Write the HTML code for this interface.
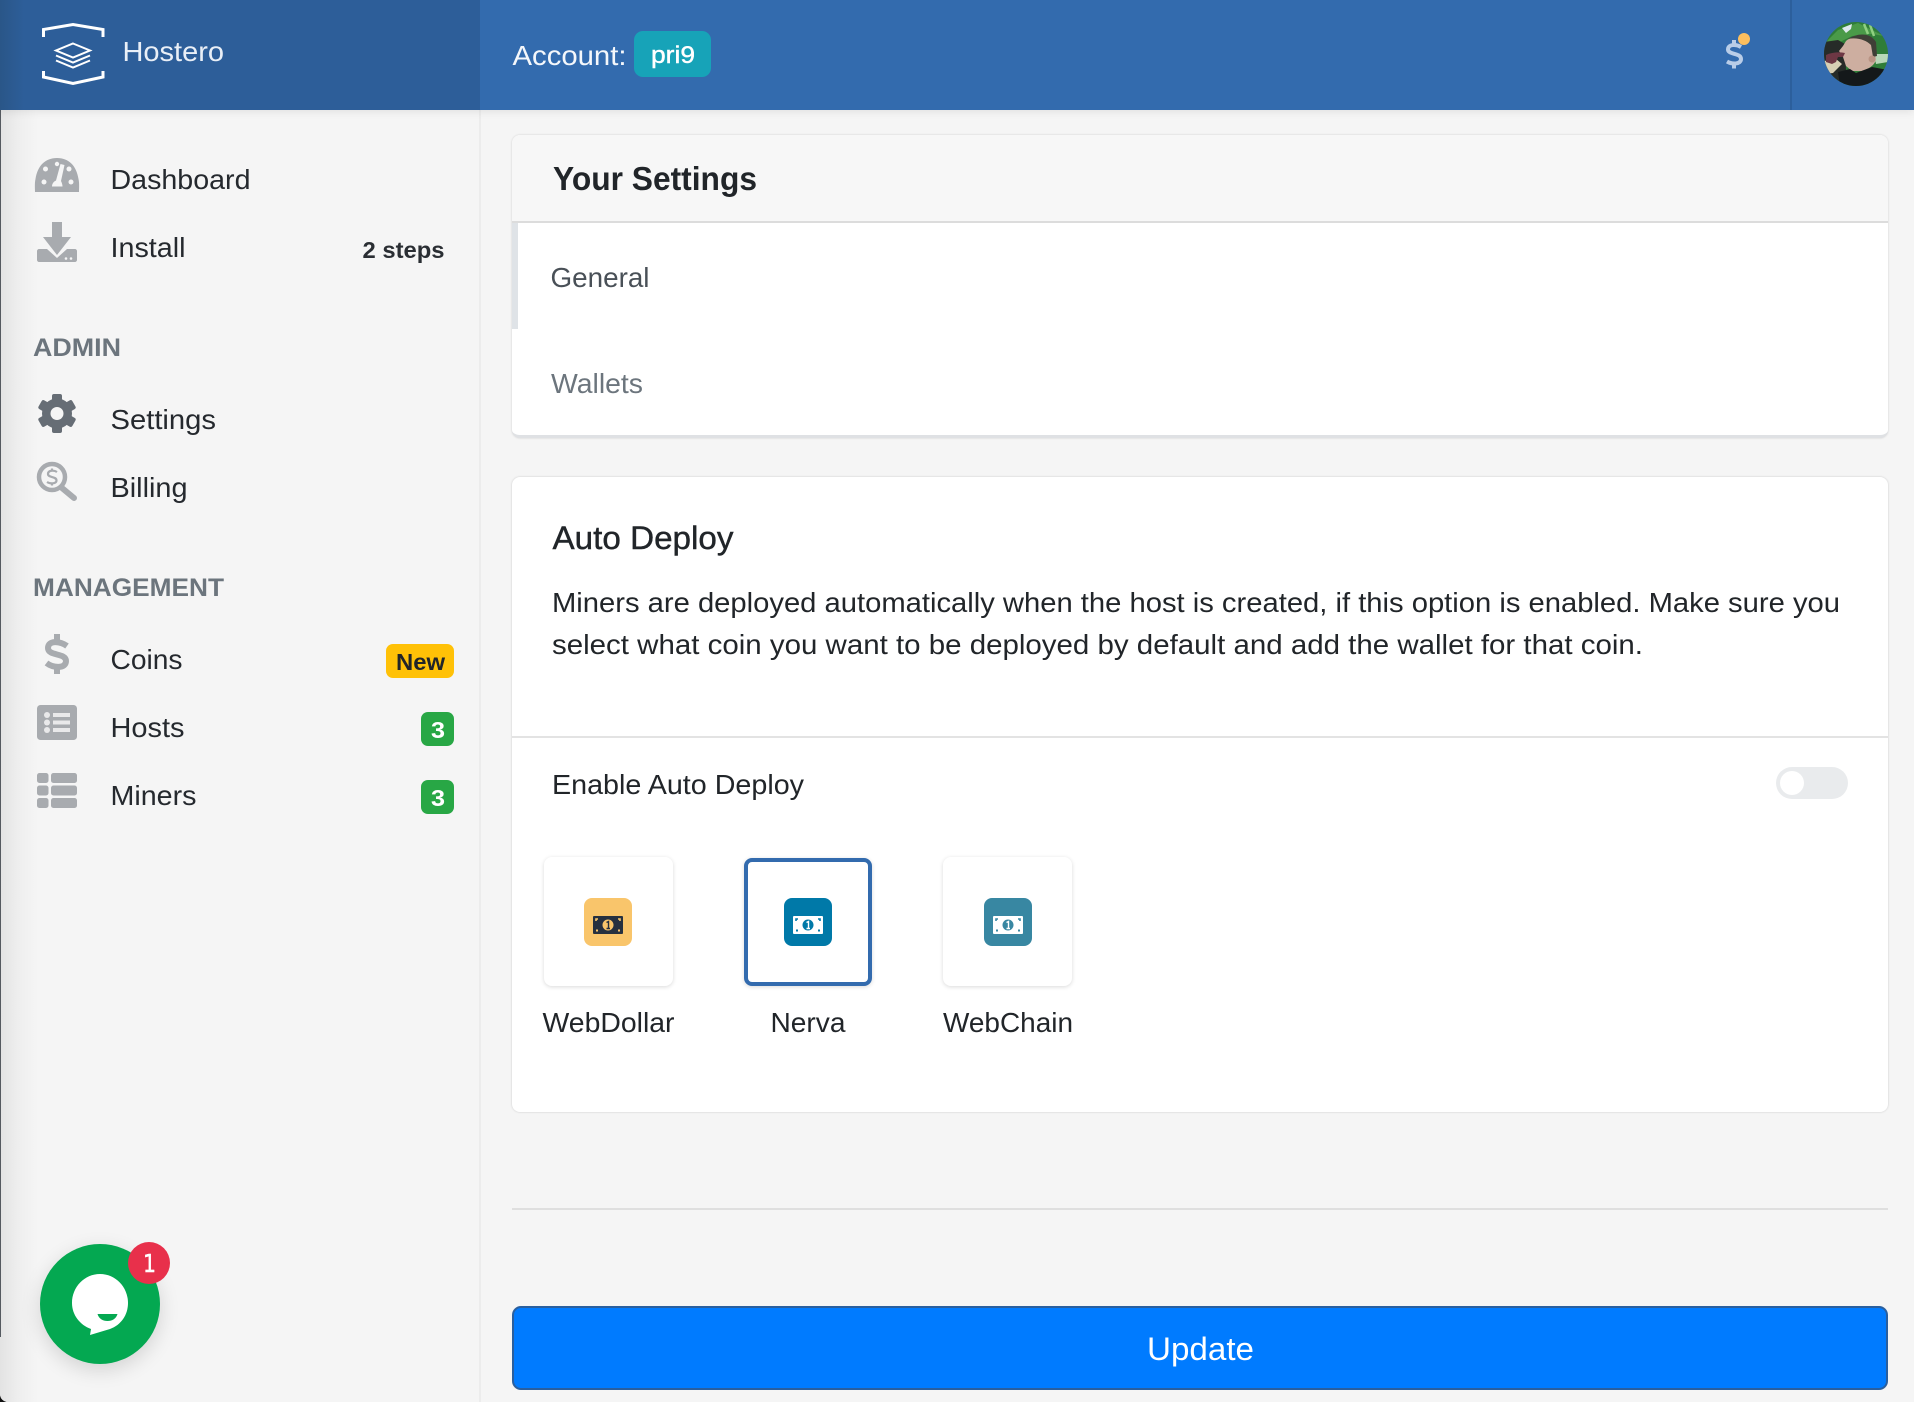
<!DOCTYPE html>
<html lang="en">
<head>
<meta charset="utf-8">
<title>Hostero - Settings</title>
<style>
html,body{margin:0;padding:0;width:1914px;height:1402px;overflow:hidden;background:#111;}
#page{position:absolute;left:0;top:0;width:1914px;height:1402px;background:#f5f5f5;border-bottom-left-radius:8px;overflow:hidden;}
.b{position:absolute;box-sizing:border-box;}
svg{position:absolute;left:0;top:0;}
text{font-family:"Liberation Sans",Arial,sans-serif;}
</style>
</head>
<body>
<div id="page">
  <!-- sidebar -->
  <div class="b" style="left:0;top:110px;width:481px;height:1292px;background:linear-gradient(90deg,#e3e3e3 0,#eee 18px,#f5f5f5 38px);border-right:2px solid #ececec;"></div>
  <div class="b" style="left:0;top:0;width:1px;height:1337px;background:#555a60;"></div>
  <!-- header -->
  <div class="b" style="left:0;top:0;width:1914px;height:110px;background:#336bae;box-shadow:0 2px 8px rgba(0,0,0,.08);"></div>
  <div class="b" style="left:0;top:0;width:480px;height:110px;background:linear-gradient(90deg,#2a5688 0,#2d5e99 24px);"></div>
  <div class="b" style="left:1790px;top:0;width:2px;height:110px;background:#2c5f9c;"></div>
  <div class="b" style="left:634px;top:31px;width:77px;height:46px;background:#17a3b8;border-radius:9px;"></div>

  <!-- card 1 -->
  <div class="b" style="left:512px;top:135px;width:1376px;height:303px;background:#fff;border-radius:8px;border-bottom:3px solid #dfe1e4;box-shadow:0 0 2px rgba(0,0,0,.16);overflow:hidden;">
    <div class="b" style="left:0;top:0;width:100%;height:88px;background:#f7f7f7;border-bottom:2px solid #dcdcdc;"></div>
    <div class="b" style="left:0;top:88px;width:6px;height:106px;background:#dfe3e7;"></div>
  </div>
  <!-- card 2 -->
  <div class="b" style="left:512px;top:477px;width:1376px;height:635px;background:#fff;border-radius:8px;box-shadow:0 0 2px rgba(0,0,0,.18);">
    <div class="b" style="left:0;top:259px;width:100%;height:2px;background:#e3e3e3;"></div>
    <div class="b" style="left:1264px;top:290px;width:72px;height:32px;background:#e9ebed;border-radius:16px;"></div>
    <div class="b" style="left:1268px;top:294px;width:24px;height:24px;background:#fff;border-radius:50%;"></div>
    <div class="b" style="left:32px;top:380px;width:129px;height:129px;background:#fff;border-radius:8px;box-shadow:0 1px 4px rgba(0,0,0,.15);"></div>
    <div class="b" style="left:232px;top:381px;width:128px;height:128px;background:#fff;border-radius:8px;border:4px solid #336bae;box-shadow:0 1px 4px rgba(0,0,0,.15);"></div>
    <div class="b" style="left:431px;top:380px;width:129px;height:129px;background:#fff;border-radius:8px;box-shadow:0 1px 4px rgba(0,0,0,.15);"></div>
    <div class="b" style="left:72px;top:421px;width:48px;height:48px;background:#f9c56b;border-radius:8px;"></div>
    <div class="b" style="left:272px;top:421px;width:48px;height:48px;background:#0079a8;border-radius:8px;"></div>
    <div class="b" style="left:472px;top:421px;width:48px;height:48px;background:#3887a2;border-radius:8px;"></div>
  </div>
  <!-- hr + button -->
  <div class="b" style="left:512px;top:1208px;width:1376px;height:2px;background:#dfdfdf;"></div>
  <div class="b" style="left:512px;top:1306px;width:1376px;height:84px;background:#007bff;border:2px solid #2a5f9e;border-radius:9px;"></div>
  <!-- sidebar badges -->
  <div class="b" style="left:386px;top:644px;width:68px;height:34px;background:#ffc107;border-radius:7px;"></div>
  <div class="b" style="left:421px;top:712px;width:33px;height:34px;background:#28a745;border-radius:7px;"></div>
  <div class="b" style="left:421px;top:780px;width:33px;height:34px;background:#28a745;border-radius:7px;"></div>
  <!-- chat -->
  <div class="b" style="left:40px;top:1244px;width:120px;height:120px;background:#04a851;border-radius:50%;box-shadow:0 6px 20px rgba(0,0,0,.14);"></div>
  <div class="b" style="left:128px;top:1242px;width:42px;height:42px;background:#e8304b;border-radius:50%;"></div>

  <svg width="1914" height="1402" viewBox="0 0 1914 1402" xmlns="http://www.w3.org/2000/svg">
    <defs>
      <clipPath id="av"><circle cx="1856" cy="54" r="32"/></clipPath>
    </defs>
    <!-- logo -->
    <g fill="none" stroke="#fff" stroke-width="3">
      <path d="M43.500 37V29.500L73 24.500L103 29.500V37"/>
      <path d="M43.500 71V77L73 83.500L103 77V71"/>
      <path d="M73 43.500L90 50.500L73 57.500L56 50.500Z" stroke-width="2"/>
      <path d="M56 55.500L73 62.500L90 55.500" stroke-width="2"/>
      <path d="M56 60.500L73 67.500L90 60.500" stroke-width="2"/>
    </g>
    <text x="122.500" y="61" font-size="28" fill="#e9eff7" textLength="101.500" lengthAdjust="spacingAndGlyphs">Hostero</text>
    <text x="512.500" y="65" font-size="28" fill="#f4f7fb" textLength="114" lengthAdjust="spacingAndGlyphs">Account:</text>
    <text x="651" y="63" font-size="24" fill="#fff" stroke="#fff" stroke-width=".4" textLength="44" lengthAdjust="spacingAndGlyphs">pri9</text>

    <!-- header dollar -->
    <g fill="none" stroke="#b9cde8" stroke-width="4">
      <path d="M1741 47C1736 44 1728 44 1728 49.500C1728 55 1741 52.500 1741 59C1741 64.500 1732 64.500 1727 61.500"/>
      <path d="M1734 40V45M1734 63V68.500"/>
    </g>
    <circle cx="1744" cy="39" r="6" fill="#fcbf5f"/>

    <!-- avatar -->
    <g clip-path="url(#av)">
      <rect x="1824" y="22" width="64" height="64" fill="#2f7d38"/>
      <path d="M1824 44L1838 30L1858 23L1884 36L1872 34L1852 36L1840 42Z" fill="#4a9a48"/>
      <path d="M1842 28L1852 24L1851 29L1846 33Z" fill="#dfe9ee"/>
      <path d="M1864 24L1868 34M1870 25L1874 36" stroke="#8fcf80" stroke-width="2.500" fill="none"/>
      <path d="M1824 42L1838 40L1845 44L1846 70L1838 86H1824Z" fill="#262b28"/>
      <path d="M1824 61L1836 59L1842 64L1833 73L1824 74Z" fill="#d7cfb4"/>
      <path d="M1874 54H1888V62L1876 64Z" fill="#b8d8b8"/>
      <path d="M1846 41C1853 35 1867 34 1874 42L1876 60C1874 66 1868 69 1862 71L1852 71L1846 66L1843 57L1839 51L1843 46Z" fill="#cdaea0"/>
      <path d="M1848 39C1857 33 1870 32 1876 42L1877 56L1873 57L1871 45C1866 40 1857 37 1848 39Z" fill="#3f3f36"/>
      <circle cx="1872" cy="59" r="3.500" fill="#b99484"/>
      <path d="M1826 55C1832 52 1840 52 1845 53L1843 57L1838 57L1836 62L1832 64L1826 62Z" fill="#6d3744"/>
      <path d="M1838 72L1850 69L1856 73L1872 67L1888 70V86H1840Z" fill="#14181a"/>
    </g>

    <!-- sidebar icons -->
    <g fill="#a8abaf">
      <!-- dashboard -->
      <path d="M35 192C35 189 34.500 183 35.500 179C37.500 166 45 158 57 158C69 158 76.500 166 78.500 179C79.500 183 79 189 79 192Z"/>
      <g fill="#f5f5f5">
        <circle cx="44" cy="182" r="2.500"/><circle cx="45.500" cy="169" r="2.500"/><circle cx="57" cy="164" r="2.200"/><circle cx="69" cy="169" r="2.500"/><circle cx="71" cy="182" r="2.500"/>
        <path d="M60.500 164L64.500 165L61 181C62 183 62.500 185 62.500 186.500H52C52 184 53.500 181.500 56 180.500Z"/>
      </g>
      <!-- install -->
      <path d="M52 222H62V237H71L57 255L43 237H52Z"/>
      <path d="M37 251C37 250 38 249 39 249H47L57 258L67 249H75C76 249 77 250 77 251V260C77 261 76 262 75 262H39C38 262 37 261 37 260Z"/>
    </g>
    <circle cx="66" cy="258.500" r="1.300" fill="#f5f5f5"/><circle cx="71" cy="258.500" r="1.300" fill="#f5f5f5"/>
    <!-- billing -->
    <circle cx="52" cy="477" r="13" fill="none" stroke="#a8abaf" stroke-width="4.500"/>
    <path d="M62 488L74 498" stroke="#a8abaf" stroke-width="6" stroke-linecap="round" fill="none"/>
    <g fill="none" stroke="#a8abaf" stroke-width="2.200" transform="translate(0,-1)">
      <path d="M57 473C54 471 48 471 48 475C48 479 56.500 477 56.500 481.500C56.500 485 50 485 47 483"/>
      <path d="M52 469.500V472M52 484V486.500"/>
    </g>
    <!-- settings gear -->
    <g fill="#666d75">
      <rect x="52" y="394" width="10" height="39" rx="2"/>
      <rect x="52" y="394" width="10" height="39" rx="2" transform="rotate(60 57 413.500)"/>
      <rect x="52" y="394" width="10" height="39" rx="2" transform="rotate(120 57 413.500)"/>
      <circle cx="57" cy="413.500" r="15"/>
    </g>
    <circle cx="57" cy="413.500" r="6.500" fill="#f5f5f5"/>
    <!-- coins -->
    <g fill="none" stroke="#a8abaf" stroke-width="6" transform="translate(0,18)">
      <path d="M67 628C60 623 48 622 48 630C48 638.500 66 634.500 66 643C66 651 53 650 46.500 645"/>
      <path d="M57 616V624M57 648V656"/>
    </g>
    <!-- hosts -->
    <rect x="37" y="705" width="40" height="35" rx="3.500" fill="#a8abaf"/>
    <g fill="#e9e9ea">
      <circle cx="47" cy="715" r="3"/><circle cx="47" cy="722.500" r="3"/><circle cx="47" cy="730" r="3"/>
      <rect x="53" y="713" width="17" height="4"/><rect x="53" y="720.500" width="17" height="4"/><rect x="53" y="728" width="17" height="4"/>
    </g>
    <!-- miners -->
    <g fill="#a8abaf">
      <rect x="37" y="773" width="11.500" height="10" rx="2.500"/><rect x="51" y="773" width="26" height="10" rx="2.500"/>
      <rect x="37" y="785.500" width="11.500" height="10" rx="2.500"/><rect x="51" y="785.500" width="26" height="10" rx="2.500"/>
      <rect x="37" y="798" width="11.500" height="10" rx="2.500"/><rect x="51" y="798" width="26" height="10" rx="2.500"/>
    </g>

    <!-- sidebar text -->
    <g font-size="28" fill="#25292e">
      <text x="110.500" y="189" textLength="140" lengthAdjust="spacingAndGlyphs">Dashboard</text>
      <text x="110.500" y="257" textLength="75" lengthAdjust="spacingAndGlyphs">Install</text>
      <text x="110.500" y="429" textLength="105.500" lengthAdjust="spacingAndGlyphs">Settings</text>
      <text x="110.500" y="497" textLength="77" lengthAdjust="spacingAndGlyphs">Billing</text>
      <text x="110.500" y="669" textLength="72" lengthAdjust="spacingAndGlyphs">Coins</text>
      <text x="110.500" y="737" textLength="74" lengthAdjust="spacingAndGlyphs">Hosts</text>
      <text x="110.500" y="805" textLength="86" lengthAdjust="spacingAndGlyphs">Miners</text>
    </g>
    <text x="362.500" y="258" font-size="23" font-weight="700" fill="#2a2e33" textLength="82" lengthAdjust="spacingAndGlyphs">2 steps</text>
    <g font-size="25" font-weight="700" fill="#6c757d">
      <text x="33" y="356" textLength="88" lengthAdjust="spacingAndGlyphs">ADMIN</text>
      <text x="33" y="596" textLength="191" lengthAdjust="spacingAndGlyphs">MANAGEMENT</text>
    </g>
    <text x="396" y="670" font-size="23" font-weight="700" fill="#212529" textLength="49" lengthAdjust="spacingAndGlyphs">New</text>
    <text x="431" y="738" font-size="23" font-weight="700" fill="#fff" textLength="14" lengthAdjust="spacingAndGlyphs">3</text>
    <text x="431" y="806" font-size="23" font-weight="700" fill="#fff" textLength="14" lengthAdjust="spacingAndGlyphs">3</text>

    <!-- main text -->
    <text x="553" y="190" font-size="33" font-weight="700" fill="#212529" textLength="204" lengthAdjust="spacingAndGlyphs">Your Settings</text>
    <text x="550.500" y="287" font-size="28" fill="#495057" textLength="99" lengthAdjust="spacingAndGlyphs">General</text>
    <text x="551" y="393" font-size="28" fill="#6c757d" textLength="92" lengthAdjust="spacingAndGlyphs">Wallets</text>
    <text x="552.500" y="549" font-size="32" fill="#212529" stroke="#212529" stroke-width=".4" textLength="181" lengthAdjust="spacingAndGlyphs">Auto Deploy</text>
    <text x="552" y="612" font-size="28" fill="#212529" textLength="1288" lengthAdjust="spacingAndGlyphs">Miners are deployed automatically when the host is created, if this option is enabled. Make sure you</text>
    <text x="552" y="654" font-size="28" fill="#212529" textLength="1091" lengthAdjust="spacingAndGlyphs">select what coin you want to be deployed by default and add the wallet for that coin.</text>
    <text x="552" y="794" font-size="28" fill="#212529" textLength="252" lengthAdjust="spacingAndGlyphs">Enable Auto Deploy</text>
    <text x="542.500" y="1032" font-size="28" fill="#212529" textLength="132" lengthAdjust="spacingAndGlyphs">WebDollar</text>
    <text x="770.500" y="1032" font-size="28" fill="#212529" textLength="75" lengthAdjust="spacingAndGlyphs">Nerva</text>
    <text x="943" y="1032" font-size="28" fill="#212529" textLength="130" lengthAdjust="spacingAndGlyphs">WebChain</text>
    <text x="1147" y="1360" font-size="32" fill="#fff" textLength="107" lengthAdjust="spacingAndGlyphs">Update</text>

    <!-- bills -->
    <g>
      <rect x="593" y="916" width="30" height="18" rx="1" fill="#26303f"/>
      <circle cx="608" cy="925" r="5.500" fill="#f9c56b"/>
      <path d="M606.500 922.500L608.500 921.500V928M606.500 928.500H610" stroke="#26303f" stroke-width="1.400" fill="none"/>
      <path d="M596 921V919H598M620 921V919H618" fill="none" stroke="#f9c56b" stroke-width="1.600"/>
      <rect x="596" y="929.500" width="2" height="2" fill="#f9c56b"/><rect x="618" y="929.500" width="2" height="2" fill="#f9c56b"/>
    </g>
    <g>
      <rect x="793" y="916" width="30" height="18" rx="1" fill="#fff"/>
      <circle cx="808" cy="925" r="5.500" fill="#0079a8"/>
      <path d="M806.500 922.500L808.500 921.500V928M806.500 928.500H810" stroke="#fff" stroke-width="1.400" fill="none"/>
      <path d="M796 921V919H798M820 921V919H818" fill="none" stroke="#0079a8" stroke-width="1.600"/>
      <rect x="796" y="929.500" width="2" height="2" fill="#0079a8"/><rect x="818" y="929.500" width="2" height="2" fill="#0079a8"/>
    </g>
    <g>
      <rect x="993" y="916" width="30" height="18" rx="1" fill="#fff"/>
      <circle cx="1008" cy="925" r="5.500" fill="#3887a2"/>
      <path d="M1006.500 922.500L1008.500 921.500V928M1006.500 928.500H1010" stroke="#fff" stroke-width="1.400" fill="none"/>
      <path d="M996 921V919H998M1020 921V919H1018" fill="none" stroke="#3887a2" stroke-width="1.600"/>
      <rect x="996" y="929.500" width="2" height="2" fill="#3887a2"/><rect x="1018" y="929.500" width="2" height="2" fill="#3887a2"/>
    </g>

    <!-- chat bubble -->
    <path d="M100 1274C115.500 1274 128 1287 128 1303C128 1315 121 1325 110 1329L90 1335L91 1329C80 1325 72 1315 72 1303C72 1287 84.500 1274 100 1274Z" fill="#fff"/>
    <path d="M97.500 1314H117.500C116 1319 112 1321 107.500 1321C103 1321 99 1319 97.500 1314Z" fill="#04a851"/>
    <text x="143" y="1272" font-size="25" fill="#fff" stroke="#fff" stroke-width=".4" style="font-family:'DejaVu Sans',sans-serif" textLength="13" lengthAdjust="spacingAndGlyphs">1</text>
  </svg>
</div>
</body>
</html>
